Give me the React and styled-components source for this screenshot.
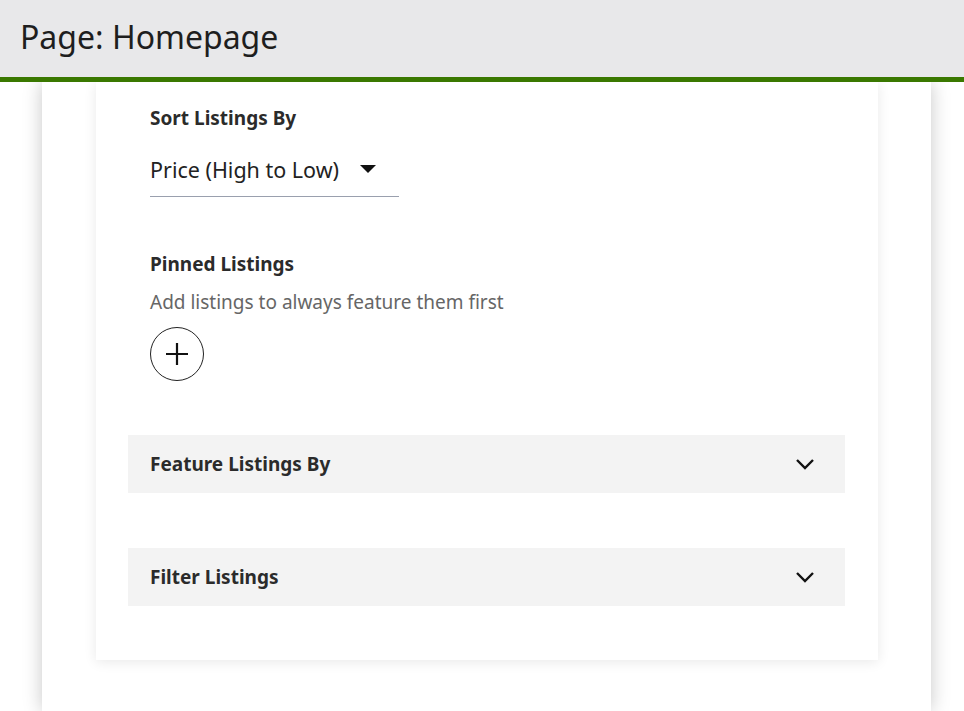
import React from 'react';
import styled, { createGlobalStyle } from 'styled-components';

const GlobalStyle = createGlobalStyle`
  html, body {
    margin: 0;
    padding: 0;
    background: #ffffff;
    font-family: "Noto Sans", "Open Sans", sans-serif;
    color: #222;
  }
  * { box-sizing: border-box; }
`;

const Header = styled.header`
  height: 82px;
  background: #e8e8ea;
  border-bottom: 5px solid #3a7800;
  display: flex;
  align-items: center;
  padding: 0 20px 4px;
  position: relative;
  z-index: 2;
`;

const Title = styled.h1`
  margin: 0;
  font-size: 32px;
  font-weight: 400;
  color: #1e1e1e;
`;

const Panel = styled.main`
  margin: 0 33px 0 42px;
  min-height: 629px;
  background: #fff;
  box-shadow: 0 0 18px rgba(0, 0, 0, 0.22);
  padding: 0 53px 0 54px;
`;

const Card = styled.section`
  background: #fff;
  box-shadow: 0 2px 12px rgba(0, 0, 0, 0.09);
  padding: 24px 33px 54px 32px;
  display: flex;
  flex-direction: column;
`;

const Field = styled.div`
  padding: 0 22px;
  display: flex;
  flex-direction: column;
  align-items: flex-start;
  margin-bottom: ${p => p.$gap || 0}px;
`;

const Label = styled.div`
  font-size: 19px;
  font-weight: 700;
  line-height: 24px;
  color: #2b2b2b;
`;

const Select = styled.div`
  margin-top: 16px;
  width: 249px;
  height: 51px;
  display: flex;
  align-items: center;
  gap: 21px;
  border-bottom: 1px solid #9aa0ae;
  font-size: 21.5px;
  color: #222;
  padding-bottom: 4px;
`;

const Caret = styled.span`
  width: 0;
  height: 0;
  border-left: 8px solid transparent;
  border-right: 8px solid transparent;
  border-top: 8px solid #111;
`;

const Hint = styled.div`
  margin-top: 14px;
  font-size: 19px;
  line-height: 24px;
  color: #666;
`;

const AddButton = styled.button`
  margin-top: 13px;
  width: 54px;
  height: 54px;
  border-radius: 50%;
  border: 1px solid #222;
  background: #fff;
  display: flex;
  align-items: center;
  justify-content: center;
  padding: 0;
  cursor: pointer;
`;

const Accordion = styled.div`
  height: 58px;
  background: #f3f3f3;
  display: flex;
  align-items: center;
  justify-content: space-between;
  padding: 0 30px 0 22px;
  margin-bottom: ${p => p.$gap || 0}px;
`;

const Chevron = () => (
  <svg width="20" height="12" viewBox="0 0 20 12" fill="none">
    <path d="M2 2 L10 10 L18 2" stroke="#111" strokeWidth="2.4" />
  </svg>
);

const Plus = () => (
  <svg width="24" height="24" viewBox="0 0 24 24" fill="none">
    <path d="M12 1 V23 M1 12 H23" stroke="#111" strokeWidth="2.2" />
  </svg>
);

export default function App() {
  return (
    <>
      <GlobalStyle />
      <Header>
        <Title>Page: Homepage</Title>
      </Header>
      <Panel>
        <Card>
          <Field $gap={55}>
            <Label>Sort Listings By</Label>
            <Select>
              Price (High to Low)
              <Caret />
            </Select>
          </Field>
          <Field $gap={54}>
            <Label>Pinned Listings</Label>
            <Hint>Add listings to always feature them first</Hint>
            <AddButton aria-label="Add listing">
              <Plus />
            </AddButton>
          </Field>
          <Accordion $gap={55}>
            <Label>Feature Listings By</Label>
            <Chevron />
          </Accordion>
          <Accordion>
            <Label>Filter Listings</Label>
            <Chevron />
          </Accordion>
        </Card>
      </Panel>
    </>
  );
}
